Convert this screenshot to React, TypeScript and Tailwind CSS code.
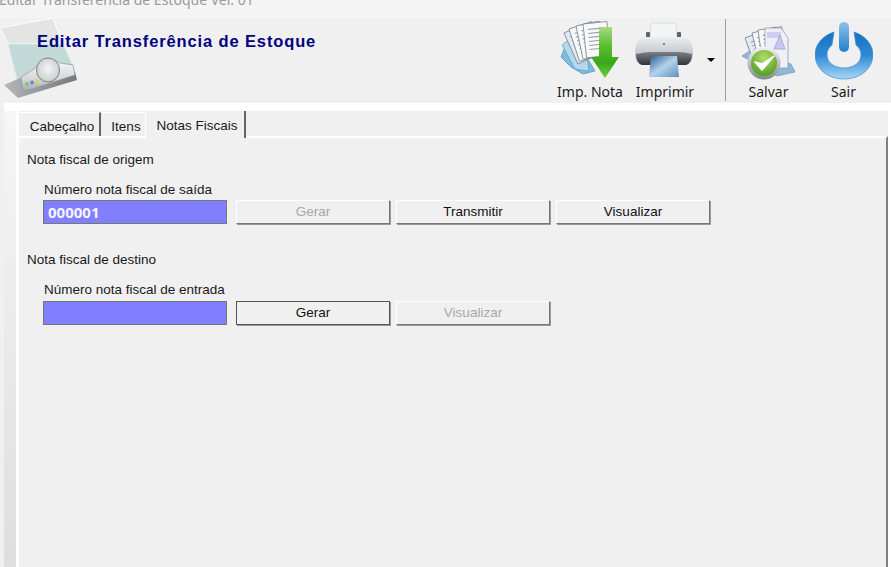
import type { ReactNode } from "react";

const DocStack = ({ x, y, rot, fill = "#f7f8fa" }: { x: number; y: number; rot: number; fill?: string }) => (
  <g transform={`translate(${x} ${y}) rotate(${rot})`}>
    <rect x="0" y="0" width="24" height="34" fill={fill} stroke="#7c8690" strokeWidth="0.8" />
    <path d="M4 6h16M4 10h16M4 14h16M4 18h16M4 22h16M4 26h12" stroke="#949da6" strokeWidth="1.1" />
  </g>
);

const ImpNotaIcon = () => (
  <svg width="62" height="60" viewBox="0 0 62 60">
    <defs>
      <linearGradient id="arrowG" x1="0" y1="0" x2="0" y2="1">
        <stop offset="0" stopColor="#a9d98a" />
        <stop offset="0.35" stopColor="#5cc02f" />
        <stop offset="0.7" stopColor="#3aa51c" />
        <stop offset="1" stopColor="#6fd03a" />
      </linearGradient>
    </defs>
    <path d="M2 36 L12 46 L24 53 L36 50 L30 40 L6 26 Z" fill="#7fbde0" stroke="#4a8bb4" strokeWidth="0.7" />
    <path d="M3 24 L16 48 L30 50 L28 36 L8 20 Z" fill="#b4d9ee" stroke="#5f9ac0" strokeWidth="0.7" />
    <DocStack x={5} y={12} rot={-24} fill="#dfeaf2" />
    <DocStack x={10} y={8} rot={-18} />
    <DocStack x={17} y={5} rot={-12} />
    <DocStack x={24} y={3} rot={-6} />
    <path d="M40 6 H53 V36 H60 L46 57 L32 36 H40 Z" fill="url(#arrowG)" />
  </svg>
);

const PrinterIcon = () => (
  <svg width="62" height="60" viewBox="0 0 62 60">
    <defs>
      <linearGradient id="printBody" x1="0" y1="0" x2="0" y2="1">
        <stop offset="0" stopColor="#eceef0" />
        <stop offset="0.55" stopColor="#c6cacf" />
        <stop offset="1" stopColor="#8d9298" />
      </linearGradient>
      <linearGradient id="printBand" x1="0" y1="0" x2="0" y2="1">
        <stop offset="0" stopColor="#7a8086" />
        <stop offset="1" stopColor="#2f3438" />
      </linearGradient>
      <linearGradient id="printPhoto" x1="0" y1="0" x2="1" y2="1">
        <stop offset="0" stopColor="#2a5e92" />
        <stop offset="0.5" stopColor="#b4d2ea" />
        <stop offset="1" stopColor="#5a8fbf" />
      </linearGradient>
    </defs>
    <path d="M17 2 H42 L43 17 H16 Z" fill="#f3f4f5" stroke="#cfd2d6" strokeWidth="0.7" />
    <rect x="12" y="11" width="4" height="6" rx="1" fill="#5f6469" />
    <rect x="43" y="11" width="4" height="6" rx="1" fill="#5f6469" />
    <path d="M8 16 H52 Q59 20 59 32 Q59 41 52 44 H8 Q1 41 1 32 Q1 20 8 16 Z" fill="url(#printBody)" />
    <path d="M2 33 Q12 31 16 31 H44 Q50 31 58 33 Q58 42 52 44 H8 Q2 42 2 33 Z" fill="url(#printBand)" />
    <circle cx="30" cy="23" r="0.9" fill="#555" />
    <path d="M17 35 H43 L45 56 H15 Z" fill="url(#printPhoto)" />
  </svg>
);

const SalvarIcon = () => (
  <svg width="56" height="58" viewBox="0 0 56 58">
    <defs>
      <radialGradient id="checkG" cx="0.5" cy="0.3" r="0.75">
        <stop offset="0" stopColor="#b6dc6a" />
        <stop offset="1" stopColor="#4a9a20" />
      </radialGradient>
      <linearGradient id="ringG" x1="0" y1="0" x2="0" y2="1">
        <stop offset="0" stopColor="#f4f4f4" />
        <stop offset="1" stopColor="#85898c" />
      </linearGradient>
    </defs>
    <path d="M1 34 L10 28 L50 42 L54 50 L36 54 Z" fill="#8fb8d8" stroke="#5f8fb5" strokeWidth="0.6" />
    <DocStack x={4} y={16} rot={-20} fill="#e4ecf3" />
    <DocStack x={11} y={11} rot={-14} />
    <DocStack x={17} y={8} rot={-8} />
    <path d="M24 6 H40 L47 16 V46 H24 Z" fill="#eef0f8" stroke="#8a93a8" strokeWidth="0.7" />
    <rect x="26" y="10" width="14" height="6" fill="#cfccf0" />
    <path d="M39 13 L44 27 H33 Z" fill="#c9c6ee" stroke="#8f8fc4" strokeWidth="0.6" />
    <circle cx="23" cy="41" r="16.5" fill="url(#ringG)" />
    <circle cx="23" cy="41" r="13" fill="url(#checkG)" />
    <path d="M14 40 L21 48 L33 34 L21 42 Z" fill="#fff" stroke="#fff" strokeWidth="1.5" strokeLinejoin="round" />
  </svg>
);

const SairIcon = () => (
  <svg width="58" height="60" viewBox="0 0 58 60">
    <defs>
      <linearGradient id="powerG" x1="0" y1="0" x2="0" y2="1">
        <stop offset="0" stopColor="#1a6fbe" />
        <stop offset="0.5" stopColor="#2f8ad6" />
        <stop offset="1" stopColor="#a9d6f3" />
      </linearGradient>
      <linearGradient id="powerBar" x1="0" y1="0" x2="0" y2="1">
        <stop offset="0" stopColor="#8ec3ea" />
        <stop offset="1" stopColor="#1f7fca" />
      </linearGradient>
    </defs>
    <path
      d="M19 11 C8 14 0 24 0 33 C0 48 13 58 29 58 C45 58 58 48 58 33 C58 24 50 14 39 11 L41 24 C45 27 46 31 46 34 C46 42 38 47 29 47 C20 47 12 42 12 34 C12 31 13 27 17 24 Z"
      fill="url(#powerG)"
      stroke="#3a8fd2"
      strokeWidth="0.7"
      strokeLinejoin="round"
    />
    <rect x="24" y="1" width="10" height="30" rx="5" fill="url(#powerBar)" />
  </svg>
);

const ScreenIcon = () => (
  <svg width="78" height="83" viewBox="0 0 78 83">
    <defs>
      <linearGradient id="standG" x1="0" y1="0" x2="0" y2="1">
        <stop offset="0" stopColor="#fafafa" />
        <stop offset="0.6" stopColor="#d6d8da" />
        <stop offset="1" stopColor="#a2a6a9" />
      </linearGradient>
      <linearGradient id="baseG" x1="0" y1="0" x2="1" y2="0">
        <stop offset="0" stopColor="#b4b8ba" />
        <stop offset="1" stopColor="#74797d" />
      </linearGradient>
      <radialGradient id="knobG" cx="0.5" cy="0.45" r="0.65">
        <stop offset="0" stopColor="#f4f4f4" />
        <stop offset="0.75" stopColor="#cfd1d3" />
        <stop offset="1" stopColor="#8d9195" />
      </radialGradient>
    </defs>
    <path d="M0 10 L53 0 L63 26 L8 26 Z" fill="#e3e5e3" stroke="#fbfbfb" strokeWidth="1.2" />
    <path d="M8 26 L63 26 L74 50 L18 66 Z" fill="#c2d9d7" stroke="#e6eeed" strokeWidth="0.8" />
    <path d="M4 67 L20 60 L75 54 L77 62 L18 80 Z" fill="url(#baseG)" />
    <path d="M21 59 L34 51 Q44 34 60 45 L73 47 L75 57 L23 74 Z" fill="url(#standG)" stroke="#8e9295" strokeWidth="0.7" />
    <ellipse cx="48" cy="52" rx="11.5" ry="12" fill="url(#knobG)" stroke="#7f8387" strokeWidth="1" />
    <circle cx="27" cy="66" r="1.9" fill="#7cc36a" />
    <circle cx="32" cy="64.5" r="1.9" fill="#7a7fd0" />
    <circle cx="37" cy="63" r="1.9" fill="#e0d44e" />
  </svg>
);

const ToolButton = ({ label, icon, width }: { label: string; icon: ReactNode; width: string }) => (
  <div className={`flex flex-col items-center ${width}`}>
    <div className="flex h-[60px] items-center justify-center">{icon}</div>
    <span className="mt-[2px] whitespace-nowrap text-[14px] leading-[18px] text-[#1a1a1a]">{label}</span>
  </div>
);

const WinButton = ({ label, disabled, focused }: { label: string; disabled?: boolean; focused?: boolean }) => (
  <button
    type="button"
    className={`h-[24px] w-[154px] border-[1.5px] border-t-white border-l-white border-r-[#777] border-b-[#777] bg-[#f0f0f0] text-center text-[13.5px] leading-[20px] shadow-[1px_1px_0_#999] ${
      disabled ? "text-[#a8a8a8]" : "text-[#111]"
    } ${focused ? "outline outline-1 -outline-offset-1 outline-[#555]" : ""}`}
  >
    {label}
  </button>
);

const NumberField = ({ value }: { value?: string }) => (
  <div className="h-[24px] w-[184px] border border-[#777] bg-[#8080ff] pl-[4px] font-['Noto_Sans',sans-serif] text-[15px] font-bold leading-[22px] text-[#f4f4ff]">
    {value}
  </div>
);

export default function App() {
  return (
    <div className="flex h-[567px] w-[891px] flex-col overflow-hidden bg-[#f0f0f0] font-['Noto_Sans','Liberation_Sans',sans-serif] text-[#1a1a1a]">
      {/* title bar */}
      <div className="h-[18px] overflow-hidden bg-[#f4f4f4]">
        <div className="-ml-[1px] -mt-[9px] whitespace-nowrap text-[14px] leading-[18px] text-[#9a9a9a]">
          Editar Transferência de Estoque Ver. 01
        </div>
      </div>

      {/* header */}
      <div className="flex h-[85px] bg-[#f0f0f0]">
        <div className="shrink-0">
          <ScreenIcon />
        </div>
        <h1 className="-ml-[41px] mt-[13px] whitespace-nowrap font-['Liberation_Sans',sans-serif] text-[16.5px] font-bold leading-[20px] tracking-[0.87px] text-[#000080]">
          Editar Transferência de Estoque
        </h1>
        <div className="ml-auto flex pt-[3px]">
          <ToolButton label="Imp. Nota" width="w-[74px]" icon={<ImpNotaIcon />} />
          <ToolButton label="Imprimir" width="w-[76px]" icon={<PrinterIcon />} />
          <div className="ml-[4px] mt-[37px] h-0 w-0 border-x-[4px] border-t-[4px] border-x-transparent border-t-black" />
          <div className="ml-[10px] mt-[-2px] h-[82px] w-px bg-[#a0a0a0]" />
          <ToolButton label="Salvar" width="ml-[5px] w-[75px]" icon={<SalvarIcon />} />
          <ToolButton label="Sair" width="w-[75px]" icon={<SairIcon />} />
          <div className="w-[10px]" />
        </div>
      </div>

      {/* client area */}
      <div className="flex flex-1 bg-white pt-[8px] font-['Liberation_Sans',sans-serif]">
        <div className="-mt-[8px] w-[4px] bg-[#f0f0f0]" />
        <div className="w-[12px] bg-linear-to-b from-[#f6f6f6] to-[#dedede]" />
        <div className="w-[3px]" />
        <div className="mr-[3px] flex min-w-0 flex-1 flex-col">
          {/* tab strip */}
          <div className="-ml-[1px] flex h-[25px] items-end bg-[#f0f0f0] text-[13.5px] leading-[18px]">
            <div className="flex h-[24px] w-[83px] items-center justify-center border-l border-t border-r-2 border-l-white border-t-white border-r-[#666] pl-[6px] pt-[5px]">
              Cabeçalho
            </div>
            <div className="flex h-[24px] w-[45px] items-center justify-center border-t border-r border-t-white border-r-white pl-[6px] pt-[5px]">
              Itens
            </div>
            <div className="relative z-10 -mb-[2px] flex h-[27px] w-[100px] items-center justify-center border-r-2 border-r-[#666] bg-[#f0f0f0] pl-[4px] pt-[3px]">
              Notas Fiscais
            </div>
          </div>
          <div className="flex flex-1 flex-col border-t-2 border-r-2 border-t-white border-r-[#808080] bg-[#f0f0f0] pl-[8px] pt-[13px] text-[13.5px] leading-[18px]">
            <section>
              <p>Nota fiscal de origem</p>
              <p className="ml-[17px] mt-[12px]">Número nota fiscal de saída</p>
              <div className="ml-[16px] mt-[1px] flex gap-[6px]">
                <div className="mr-[3px]">
                  <NumberField value="000001" />
                </div>
                <WinButton label="Gerar" disabled />
                <WinButton label="Transmitir" />
                <WinButton label="Visualizar" />
              </div>
            </section>
            <section className="mt-[27px]">
              <p>Nota fiscal de destino</p>
              <p className="ml-[17px] mt-[12px]">Número nota fiscal de entrada</p>
              <div className="ml-[16px] mt-[2px] flex gap-[6px]">
                <div className="mr-[3px]">
                  <NumberField />
                </div>
                <WinButton label="Gerar" focused />
                <WinButton label="Visualizar" disabled />
              </div>
            </section>
          </div>
        </div>
      </div>
    </div>
  );
}
